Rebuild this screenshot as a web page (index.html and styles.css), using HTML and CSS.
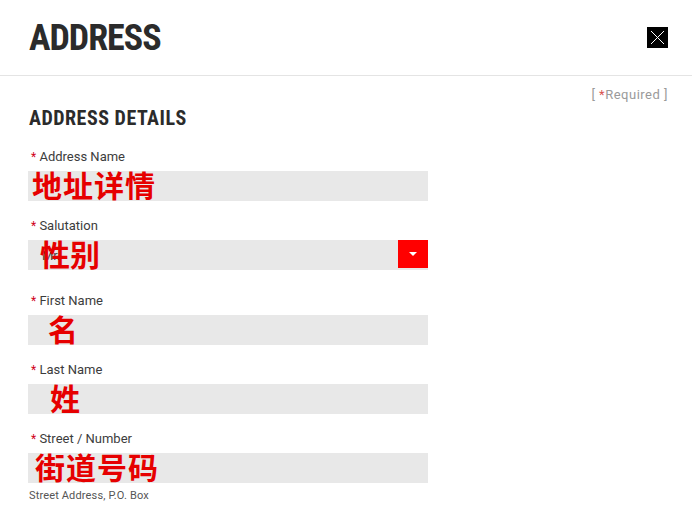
FILE: index.html
```html
<!DOCTYPE html>
<html lang="en">
<head>
<meta charset="utf-8">
<title>Address</title>
<link rel="stylesheet" href="styles.css">
</head>
<body>
<header class="modal-header">
  <h1 class="modal-title">ADDRESS</h1>
  <button class="close-btn" aria-label="Close">
    <svg viewBox="0 0 21 21" width="21" height="21"><path d="M4 4 L17 17 M17 4 L4 17" stroke="#fff" stroke-width="1" fill="none"/></svg>
  </button>
</header>
<main class="modal-body">
  <div class="required-note">[ <span class="star">*</span>Required ]</div>
  <h2 class="section-title">ADDRESS DETAILS</h2>

  <div class="field field-first">
    <label class="field-label"><span class="star">*</span> Address Name</label>
    <div class="input-wrap">
      <div class="input"></div>
      <span class="note note-1">地址详情</span>
    </div>
  </div>

  <div class="field field-select">
    <label class="field-label"><span class="star">*</span> Salutation</label>
    <div class="input-wrap">
      <div class="input select"><span class="select-value">Mr.</span><span class="select-btn"><span class="caret"></span></span></div>
      <span class="note note-2">性别</span>
    </div>
  </div>

  <div class="field">
    <label class="field-label"><span class="star">*</span> First Name</label>
    <div class="input-wrap">
      <div class="input"></div>
      <span class="note note-3">名</span>
    </div>
  </div>

  <div class="field">
    <label class="field-label"><span class="star">*</span> Last Name</label>
    <div class="input-wrap">
      <div class="input"></div>
      <span class="note note-4">姓</span>
    </div>
  </div>

  <div class="field">
    <label class="field-label"><span class="star">*</span> Street / Number</label>
    <div class="input-wrap">
      <div class="input"></div>
      <span class="note note-5">街道号码</span>
    </div>
    <div class="help">Street Address, P.O. Box</div>
  </div>
</main>
</body>
</html>
```
FILE: styles.css
```css
html, body {
  margin: 0;
  padding: 0;
  background: #fff;
  font-family: Roboto, "Noto Sans", sans-serif;
  color: #333;
}
.modal-header {
  height: 76px;
  border-bottom: 1px solid #e4e4e4;
  display: flex;
  align-items: center;
  justify-content: space-between;
  padding: 0 24px 0 29px;
  box-sizing: border-box;
}
.modal-title {
  margin: 0;
  font-size: 36px;
  font-weight: 700;
  font-stretch: 75%;
  color: #2b2b2b;
  letter-spacing: -1px;
  line-height: 1;
}
.close-btn {
  width: 21px;
  height: 21px;
  padding: 0;
  border: 0;
  background: #000;
  display: flex;
}
.modal-body {
  padding: 0 24px 0 28px;
}
.required-note {
  text-align: right;
  font-size: 13px;
  color: #9a9a9a;
  line-height: 16px;
  padding-top: 11px;
  letter-spacing: 0.5px;
}
.required-note .star { color: #d9534f; }
.star { color: #d0021b; }
.section-title {
  margin: 4px 0 0;
  padding-left: 1px;
  font-size: 20px;
  font-weight: 700;
  font-stretch: 84%;
  color: #2b2b2b;
  line-height: 22px;
  letter-spacing: 0.5px;
}
.field { width: 400px; margin-top: 17px; }
.field-first { margin-top: 20px; }
.field-select + .field { margin-top: 23px; }
.field-label {
  display: block;
  font-size: 13px;
  line-height: 16px;
  color: #3c3c3c;
  padding-left: 3px;
  margin-bottom: 6px;
}
.field-label .star { font-size: 12px; }
.input-wrap { position: relative; }
.input {
  height: 30px;
  background: #e8e8e8;
}
.select {
  display: flex;
  align-items: center;
  justify-content: space-between;
}
.select-value {
  font-size: 13px;
  color: #444;
  padding-left: 14px;
}
.select-btn {
  width: 30px;
  height: 28px;
  align-self: flex-start;
  background: #ff0000;
  display: flex;
  align-items: center;
  justify-content: center;
}
.caret {
  width: 0;
  height: 0;
  border-left: 4px solid transparent;
  border-right: 4px solid transparent;
  border-top: 4px solid #fff;
}
.note {
  position: absolute;
  top: -1px;
  font-family: "Noto Sans CJK SC", sans-serif;
  font-weight: 700;
  color: #e60000;
  font-size: 30px;
  line-height: 28px;
  white-space: nowrap;
}
.note-1 { left: 4px; letter-spacing: 1px; }
.note-2 { left: 12px; }
.note-3 { left: 20px; }
.note-4 { left: 22px; }
.note-5 { left: 7px; letter-spacing: 1px; }
.help {
  font-size: 11px;
  line-height: 14px;
  color: #555;
  margin-top: 6px;
  padding-left: 1px;
  letter-spacing: 0.15px;
}
```
